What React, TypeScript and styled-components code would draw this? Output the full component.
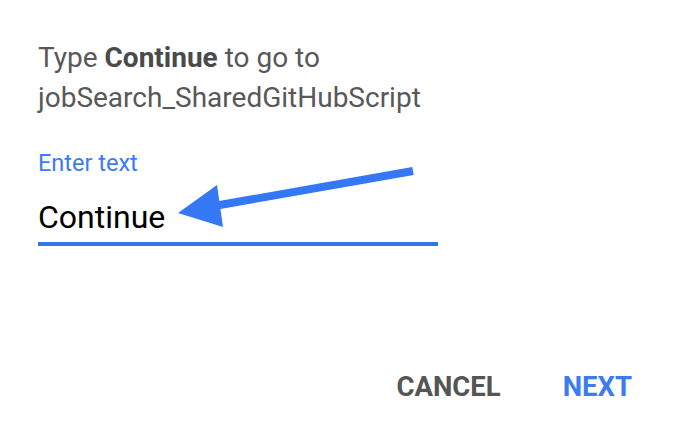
import React from "react";
import styled, { createGlobalStyle } from "styled-components";

const Global = createGlobalStyle`
  html, body { margin: 0; padding: 0; background: #fff; }
  body { font-family: Roboto, "Noto Sans", sans-serif; }
`;

const Dialog = styled.div`
  width: 692px;
  height: 438px;
  box-sizing: border-box;
  padding: 38px 38px 0 38px;
  display: flex;
  flex-direction: column;
  background: #fff;
`;

const Prompt = styled.p`
  margin: 0;
  font-size: 28px;
  line-height: 40px;
  color: #585858;
  b { font-weight: 700; color: #4a4a4a; }
`;

const Field = styled.div`
  position: relative;
  margin-top: 31px;
  width: 400px;
  display: flex;
  flex-direction: column;
`;

const Label = styled.label`
  font-size: 23.5px;
  line-height: 28px;
  color: #3d7bf0;
`;

const Input = styled.div`
  margin-top: 21px;
  font-size: 32px;
  line-height: 38px;
  color: #000;
  padding-bottom: 6px;
  border-bottom: 4px solid #3873e8;
`;

const Arrow = styled.svg`
  position: absolute;
  left: 0;
  top: 0;
  overflow: visible;
`;

const Actions = styled.div`
  margin-top: auto;
  margin-bottom: 35px;
  display: flex;
  justify-content: flex-end;
  gap: 62px;
  padding-right: 22px;
`;

const Button = styled.button<{ $primary?: boolean }>`
  border: 0;
  background: none;
  padding: 0;
  font-family: Roboto, "Noto Sans", sans-serif;
  font-weight: 700;
  font-size: 27.5px;
  line-height: 32px;
  color: ${(p) => (p.$primary ? "#3d7bf0" : "#555")};
`;

export default function App() {
  return (
    <>
      <Global />
      <Dialog>
        <Prompt>
          Type <b>Continue</b> to go to
          <br />
          jobSearch_SharedGitHubScript
        </Prompt>
        <Field>
          <Label>Enter text</Label>
          <Input>Continue</Input>
          <Arrow width="400" height="100" viewBox="0 0 400 100">
            <line x1="375" y1="22" x2="176" y2="57" stroke="#3478f6" strokeWidth="8" />
            <polygon points="140,64 179,36 185,78" fill="#3478f6" />
          </Arrow>
        </Field>
        <Actions>
          <Button>CANCEL</Button>
          <Button $primary>NEXT</Button>
        </Actions>
      </Dialog>
    </>
  );
}
